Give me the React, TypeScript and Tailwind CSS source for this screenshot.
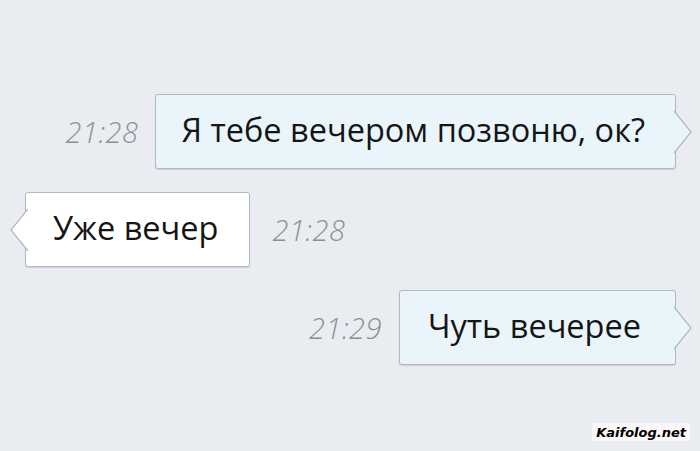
import React from 'react';

type Side = 'in' | 'out';

function Tail({ side, fill }: { side: Side; fill: string }) {
  // small arrow that sticks out of the bubble edge
  const isOut = side === 'out';
  return (
    <svg
      className={
        'absolute top-1/2 -translate-y-1/2 ' + (isOut ? 'right-[-17px]' : 'left-[-16px]')
      }
      width="18"
      height="44"
      viewBox="0 0 18 44"
    >
      {isOut ? (
        <>
          <polygon points="0,1 17,22 0,43" fill={fill} />
          <polyline points="0,1 17,22 0,43" fill="none" stroke="#b3b8bd" strokeWidth="1.2" />
        </>
      ) : (
        <>
          <polygon points="18,1 1,22 18,43" fill={fill} />
          <polyline points="18,1 1,22 18,43" fill="none" stroke="#b3b8bd" strokeWidth="1.2" />
        </>
      )}
    </svg>
  );
}

function Time({ children }: { children: React.ReactNode }) {
  return (
    <span className="text-[29px] italic font-light text-[#8c9094] tracking-[0.5px]">
      {children}
    </span>
  );
}

function Bubble({ side, text, pad }: { side: Side; text: string; pad: string }) {
  const fill = side === 'out' ? '#eaf5fb' : '#ffffff';
  return (
    <div
      className={
        'relative h-[75px] flex items-center border border-[#b3b8bd] rounded-[3px] shadow-[0_1px_1px_rgba(0,0,0,0.12)] text-[32.5px] text-[#151515] ' +
        (side === 'out' ? 'bg-[#eaf5fb] ' : 'bg-white ') +
        pad
      }
    >
      <span className="leading-none pb-[2px]">{text}</span>
      <Tail side={side} fill={fill} />
    </div>
  );
}

export default function App() {
  return (
    <div
      className="w-[700px] h-[451px] bg-[#e9ecf0] relative overflow-hidden"
      style={{ fontFamily: '"Open Sans", "Noto Sans", sans-serif' }}
    >
      <div className="flex flex-col pt-[94px] gap-[23px]">
        <div className="flex items-center justify-end gap-[17px] pr-[24px]">
          <Time>21:28</Time>
          <Bubble side="out" text="Я тебе вечером позвоню, ок?" pad="pl-[25px] pr-[30px]" />
        </div>
        <div className="flex items-center gap-[22px] pl-[25px]">
          <Bubble side="in" text="Уже вечер" pad="pl-[27px] pr-[31px]" />
          <Time>21:28</Time>
        </div>
        <div className="flex items-center justify-end gap-[17px] pr-[24px]">
          <Time>21:29</Time>
          <Bubble side="out" text="Чуть вечерее" pad="pl-[28px] pr-[34px]" />
        </div>
      </div>

      {/* водяной знак */}
      <div className="absolute right-[10px] bottom-[10px] bg-[#fbf6f7] px-[4px] h-[18px] flex items-center">
        <span
          className="text-[13px] font-bold italic text-black leading-none"
          style={{ fontFamily: '"DejaVu Sans", sans-serif' }}
        >
          Kaifolog.net
        </span>
      </div>
    </div>
  );
}
